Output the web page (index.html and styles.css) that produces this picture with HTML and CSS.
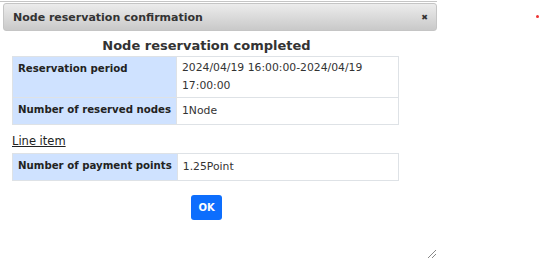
FILE: index.html
```html
<!DOCTYPE html>
<html lang="en">

<head>
    <meta charset="UTF-8" />
    <title>Node reservation confirmation</title>
    <link rel="stylesheet" href="styles.css">
</head>

<body>
    <div class="dialog">
        <div class="titlebar">
            <span class="title">Node reservation confirmation</span>
            <span class="close">&#x2716;</span>
        </div>
        <div class="content">
            <h2>Node reservation completed</h2>
            <table class="info">
                <tr>
                    <th>Reservation period</th>
                    <td>2024/04/19 16:00:00-2024/04/19 17:00:00</td>
                </tr>
                <tr>
                    <th>Number of reserved nodes</th>
                    <td>1Node</td>
                </tr>
            </table>
            <div class="section">Line item</div>
            <table class="info">
                <tr>
                    <th>Number of payment points</th>
                    <td>1.25Point</td>
                </tr>
            </table>
            <div class="buttons">
                <button class="ok">OK</button>
            </div>
        </div>
        <div class="resize"></div>
    </div>
    <span class="dot"></span>
</body>

</html>
```

FILE: styles.css
```css
body {
    margin: 0;
    background-color: #fff;
    font-family: "DejaVu Sans", Verdana, sans-serif;
    color: #222;
    position: relative;
    width: 540px;
    height: 258px;
    overflow: hidden;
}

.dialog {
    width: 437px;
    height: 258px;
    border-top: 1px solid #c5c5c5;
    margin-top: 1px;
    padding: 1px 0 0 3px;
    box-sizing: border-box;
    position: relative;
}

.titlebar {
    display: flex;
    align-items: center;
    justify-content: space-between;
    height: 28px;
    box-sizing: border-box;
    padding: 0 8px 0 9px;
    border: 1px solid #c5c5c5;
    border-radius: 3px;
    background: linear-gradient(#ececec, #c9c9c9);
}

.title {
    font-size: 11px;
    font-weight: bold;
    color: #333;
}

.close {
    font-size: 8px;
    color: #333;
}

.content {
    padding: 0 36px 0 9px;
}

h2 {
    margin: 7px 0 3px;
    text-align: center;
    font-size: 13px;
    font-weight: bold;
    color: #333;
}

.info {
    border-collapse: collapse;
    width: 387px;
}

.info th,
.info td {
    border: 1px solid #dee2e6;
    padding: 2px 5px;
    height: 21px;
    line-height: 18px;
    text-align: left;
    vertical-align: middle;
}

.info th {
    width: 153px;
    white-space: nowrap;
    background-color: #cfe2ff;
    font-size: 10.2px;
    font-weight: bold;
    color: #222;
    vertical-align: top;
    padding-top: 3px;
}

.info td {
    font-size: 10.8px;
    color: #333;
}

.section {
    margin: 9px 0 5px;
    font-size: 11.5px;
    text-decoration: underline;
    color: #222;
}

.buttons {
    text-align: center;
    margin-top: 14px;
}

.ok {
    background-color: #0d6efd;
    color: #fff;
    border: none;
    border-radius: 3px;
    padding: 0;
    width: 31px;
    height: 25px;
    font-family: "DejaVu Sans", Verdana, sans-serif;
    font-size: 10px;
    font-weight: bold;
}

.resize {
    position: absolute;
    right: 1px;
    bottom: 1px;
    width: 8px;
    height: 8px;
    background: linear-gradient(135deg, transparent 45%, #888 45%, #888 55%, transparent 55%, transparent 70%, #888 70%, #888 80%, transparent 80%);
}

.dot {
    position: absolute;
    left: 536px;
    top: 15px;
    width: 3px;
    height: 3px;
    border-radius: 50%;
    background-color: #e33;
}
```
